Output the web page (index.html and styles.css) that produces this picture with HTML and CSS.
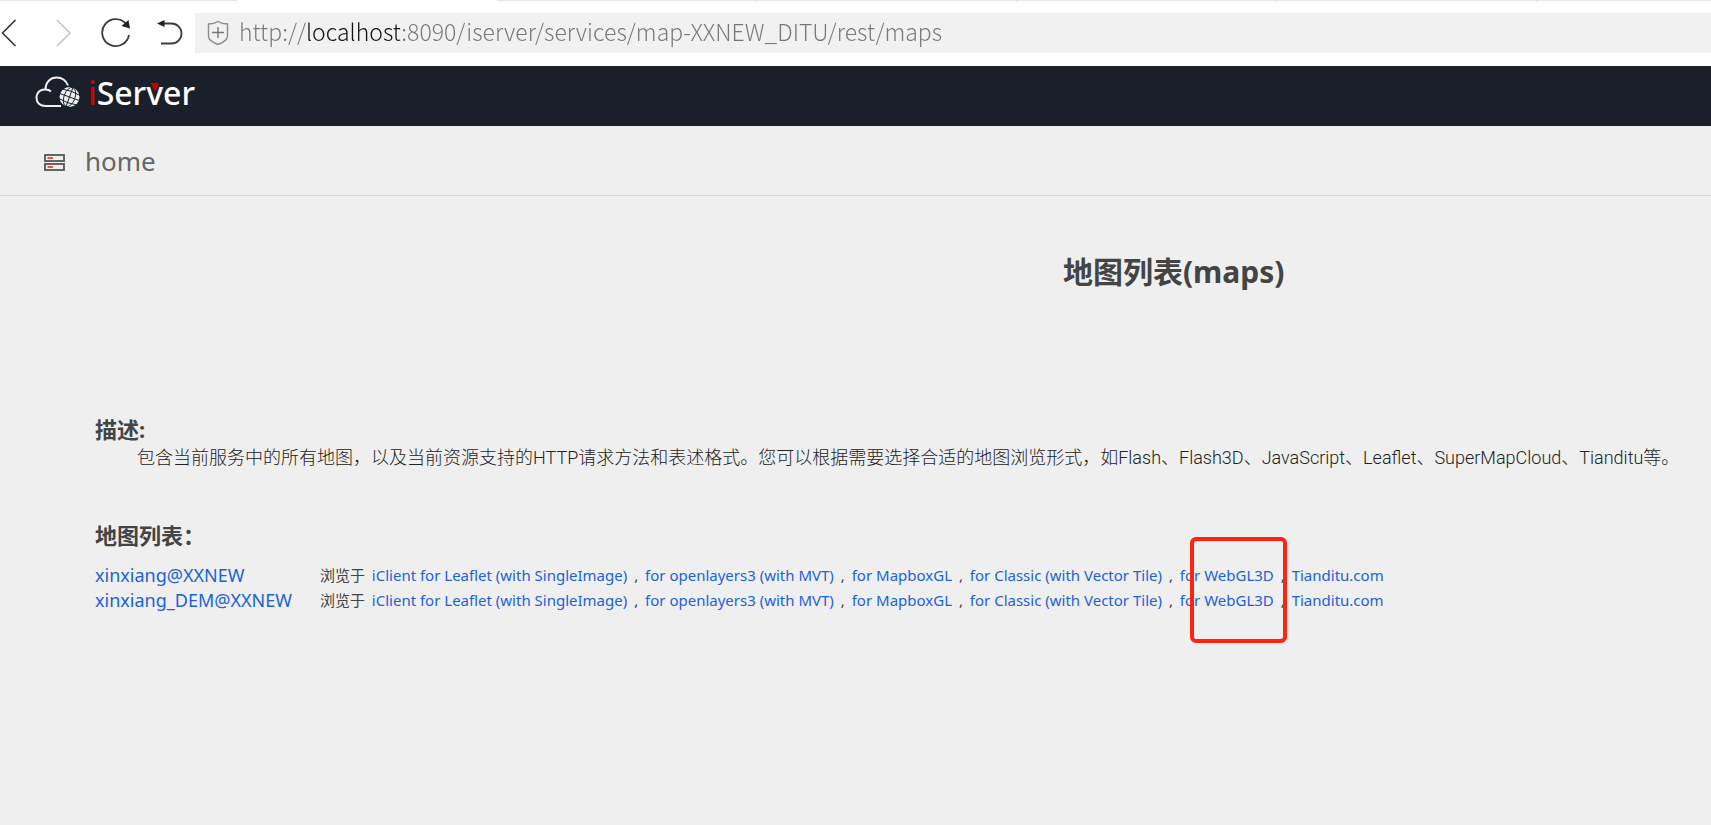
FILE: index.html
```html
<!DOCTYPE html>
<html lang="zh-CN">
<head>
    <meta charset="UTF-8">
    <meta name="viewport" content="width=device-width, initial-scale=1.0">
    <title>地图列表(maps)</title>
    <link rel="stylesheet" href="styles.css">
</head>
<body>
    <div class="tabs"><span class="tab first"></span><span class="tab active"></span><span class="tab"></span><span class="tab"></span><span class="tab"></span><span class="tab"></span><span class="tab last"></span></div>
    <div class="toolbar">
        <button class="nav-btn back" aria-label="后退">
            <svg width="17" height="28" viewBox="0 0 17 28"><path d="M15.500 1L2.500 14L15.500 27" fill="none" stroke="#333" stroke-width="1.6"/></svg>
        </button>
        <button class="nav-btn forward" aria-label="前进" disabled>
            <svg width="16" height="28" viewBox="0 0 16 28"><path d="M1 1L14 14L1 27" fill="none" stroke="#c4c4c4" stroke-width="1.6"/></svg>
        </button>
        <button class="nav-btn reload" aria-label="刷新">
            <svg width="30" height="30" viewBox="0 0 30 30"><path d="M28 17A13.5 13.5 0 1 1 25.500 6.500" fill="none" stroke="#3c3c3c" stroke-width="1.800"/><path d="M27.500 2L29 10.500L20.500 8Z" fill="#222"/></svg>
        </button>
        <button class="nav-btn undo" aria-label="恢复">
            <svg width="26" height="28" viewBox="0 0 26 28"><path d="M5 4.500H14.500A10 10 0 0 1 14.500 24.500H4" fill="none" stroke="#3c3c3c" stroke-width="1.800"/><path d="M0 4.500L7.500 1V8Z" fill="#222"/></svg>
        </button>
        <div class="address">
            <svg width="22" height="26" viewBox="0 0 22 26"><path d="M11 1.500C8 3.500 5 4 1.500 4V16C1.500 20 5.500 22.500 11 24.500C16.500 22.500 20.500 20 20.500 16V4C17 4 14 3.500 11 1.500Z" fill="none" stroke="#8c8c8c" stroke-width="1.400"/><path d="M5 12.500H17M11 7V18" stroke="#777" stroke-width="1.400"/></svg>
            <input type="text" class="url" aria-label="地址" value="http://localhost:8090/iserver/services/map-XXNEW_DITU/rest/maps">
        </div>
    </div>
    <header class="header">
        <a href="#" class="logo">
            <svg width="45" height="32" viewBox="0 0 45 32">
                <path d="M26 30H10.500C5 30 1.500 26.500 1.500 22C1.500 16 6 13 10.500 13.500C13 13.500 14.500 14 16 15.500M10.500 13.500C10.500 6 15.500 1.500 21.500 1.500C27 1.500 31 4.500 33 9.500" fill="none" stroke="#eee" stroke-width="2"/>
                <circle cx="34.500" cy="21" r="10" fill="#eee"/>
                <g fill="none" stroke="#1a2029" stroke-width="0.900" transform="rotate(20 34.500 21)">
                    <path d="M24 21H45M25 16Q34.500 14 44 16M25 26Q34.500 28 44 26M34.500 11V31"/>
                    <ellipse cx="34.500" cy="21" rx="5.500" ry="10"/>
                </g>
            </svg>
            <span class="logo-text"><span class="logo-i">i</span>Ser<span class="logo-v">v<svg width="8" height="9" viewBox="0 0 8 9"><path d="M0 0H8L4 9Z" fill="#d00000"/></svg></span>er</span>
        </a>
    </header>
    <nav class="breadcrumb">
        <svg width="21" height="18" viewBox="0 0 21 18">
            <g fill="#eee" stroke="#555" stroke-width="1.800"><rect x="1" y="1" width="19" height="6"/><rect x="1" y="10" width="19" height="6"/></g>
            <path d="M3.500 4H9M3.500 13H9" stroke="#d9232d" stroke-width="1.500"/>
        </svg>
        <a href="#">home</a>
    </nav>
    <main class="content">
        <h1>地图列表(maps)</h1>
        <section class="description">
            <h2>描述:</h2>
            <p>包含当前服务中的所有地图，以及当前资源支持的HTTP请求方法和表述格式。您可以根据需要选择合适的地图浏览形式，如Flash、Flash3D、JavaScript、Leaflet、SuperMapCloud、Tianditu等。</p>
        </section>
        <section>
            <h2>地图列表：</h2>
            <table class="maps">
                <tr>
                    <td class="name"><a href="#">xinxiang@XXNEW</a></td>
                    <td class="links">浏览于 <a href="#">iClient for Leaflet (with SingleImage)</a> , <a href="#">for openlayers3 (with MVT)</a> , <a href="#">for MapboxGL</a> , <a href="#">for Classic (with Vector Tile)</a> , <a href="#">for <span class="marked">WebGL3D<span class="mark"></span></span></a> , <a href="#">Tianditu.com</a></td>
                </tr>
                <tr>
                    <td class="name"><a href="#">xinxiang_DEM@XXNEW</a></td>
                    <td class="links">浏览于 <a href="#">iClient for Leaflet (with SingleImage)</a> , <a href="#">for openlayers3 (with MVT)</a> , <a href="#">for MapboxGL</a> , <a href="#">for Classic (with Vector Tile)</a> , <a href="#">for WebGL3D</a> , <a href="#">Tianditu.com</a></td>
                </tr>
            </table>
        </section>
    </main>
</body>
</html>
```
FILE: styles.css
```css
* {
    box-sizing: border-box;
}
body {
    margin: 0;
    min-height: 100vh;
    background: #efefef;
    color: #444;
    font-family: "Noto Sans", "Noto Sans CJK SC", sans-serif;
}
a {
    color: #1c62d8;
    text-decoration: none;
}
svg {
    display: block;
    flex: none;
}
.tabs {
    display: flex;
    height: 1px;
    overflow: hidden;
    background: #fff;
}
.tab {
    flex: 0 0 260px;
    background: #e5e5e5;
    border-right: 1px solid #ccc;
}
.tab.first {
    flex-basis: 237px;
    border-right: 0;
}
.tab.active {
    background: #fff;
    border: 0;
}
.tab.last {
    flex: 1;
    border: 0;
}
.toolbar {
    display: flex;
    align-items: center;
    height: 65px;
    padding-bottom: 2px;
    background: #fff;
}
.nav-btn {
    flex: none;
    padding: 0;
    border: 0;
    background: none;
}
.forward {
    margin-left: 39px;
}
.reload {
    margin-left: 29px;
}
.undo {
    margin-left: 26px;
}
.address {
    flex: 1;
    display: flex;
    align-items: center;
    gap: 10px;
    height: 40px;
    margin-left: 12px;
    padding-left: 12px;
    background: #f1f1f1;
}
.url {
    flex: 1;
    height: 40px;
    padding: 0 0 4px;
    border: 0;
    outline: 0;
    font: 300 23px "Noto Sans CJK SC", sans-serif;
    color: transparent;
    /* host is darker than the rest of the url */
    background: linear-gradient(to right, #777 67px, #111 67px, #111 161px, #777 161px);
    -webkit-background-clip: text;
    background-clip: text;
}
.header {
    height: 60px;
    padding: 10px 35px;
    background: #1a2029;
}
.logo {
    display: inline-flex;
    gap: 8px;
    color: #fff;
}
.logo-text {
    font-size: 32px;
    font-weight: 500;
    line-height: 34px;
}
.logo-i {
    color: #d00000;
}
.logo-v {
    position: relative;
}
.logo-v svg {
    position: absolute;
    left: 5px;
    top: 12px;
}
.breadcrumb {
    display: flex;
    align-items: center;
    gap: 20px;
    height: 70px;
    padding-left: 44px;
    border-bottom: 1px solid #d3dcee;
}
.breadcrumb svg {
    margin-top: 5px;
}
.breadcrumb a {
    color: #666;
    font-size: 26px;
}
.content {
    margin: 55px 0 0 95px;
    padding-bottom: 60px;
    border-top: 1px solid #eaf1f5;
}
h1 {
    margin: 0 0 122px;
    padding-left: 34%;
    padding-right: 8px;
    text-align: center;
    font-size: 30px;
    line-height: 39px;
}
h2 {
    margin: 0;
    font-size: 22px;
    line-height: 32px;
}
.description {
    margin-bottom: 48px;
}
.description p {
    margin: 0 0 0 42px;
    color: #222;
    font-family: Roboto, "Noto Sans CJK SC", sans-serif;
    font-weight: 300;
    font-size: 18px;
    line-height: 26px;
    white-space: nowrap;
}
.maps {
    margin-top: 12px;
    border-collapse: collapse;
    line-height: 25px;
    white-space: nowrap;
}
.maps td {
    padding: 0;
}
.maps .name {
    padding-right: 28px;
    font-size: 18px;
}
.maps .links {
    font-size: 15px;
}
.links a {
    margin: 0 3px;
}
.marked {
    position: relative;
}
/* red frame round the WebGL3D links of both rows */
.mark {
    position: absolute;
    left: -14px;
    top: -28px;
    width: 97px;
    height: 106px;
    border: 4px solid #ff2312;
    border-radius: 6px;
}
```
